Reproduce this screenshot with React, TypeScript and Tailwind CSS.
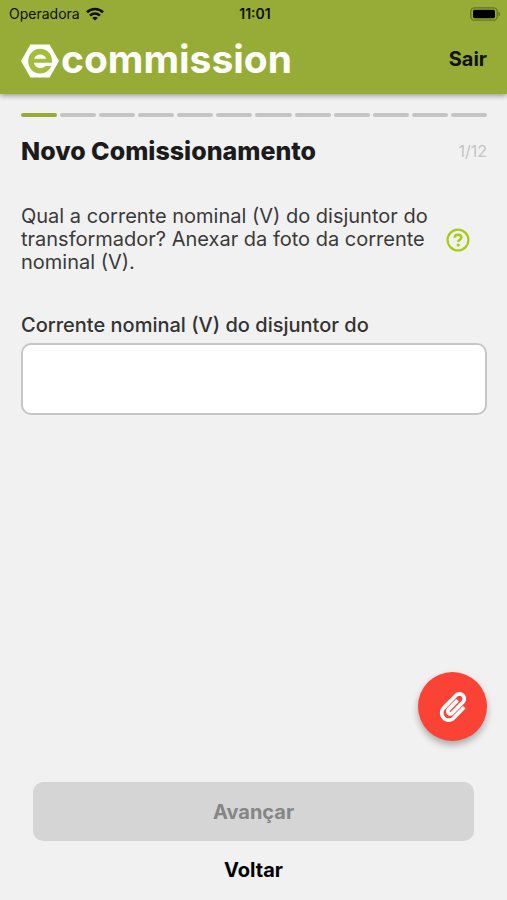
import { useState } from "react";
import { FaPaperclip } from "react-icons/fa";

const TOTAL_STEPS = 12;

function WifiIcon() {
  return (
    <svg viewBox="0 0 18 14" className="h-[14px] w-[18px]" fill="none" stroke="#0d0f03" strokeWidth="2.6" aria-hidden="true">
      <path d="M1 5.2C5.6 0.9 12.4 0.9 17 5.2" />
      <path d="M4 8.6C6.9 6 11.1 6 14 8.6" />
      <path d="M9 13.6 6.2 10.9C7.8 9.5 10.2 9.5 11.8 10.9Z" fill="#0d0f03" stroke="none" />
    </svg>
  );
}

function BatteryIcon() {
  return (
    <svg viewBox="0 0 31 14" className="h-[14px] w-[31px]" aria-hidden="true">
      <rect x="0.8" y="0.8" width="26.4" height="12.4" rx="3.6" fill="none" stroke="#66751f" strokeWidth="1.3" />
      <rect x="3" y="2.8" width="22" height="8.4" rx="1.6" fill="#000" />
      <path d="M28.4 4.6C30.6 5.4 30.6 8.6 28.4 9.4Z" fill="#66751f" />
    </svg>
  );
}

function HexMark() {
  return (
    <svg viewBox="0 0 38 34" className="h-[34px] w-[38px]" aria-hidden="true">
      <path d="M9.4 0.5H28.6L38 17 28.6 33.5H9.4L0 17Z" fill="#fff" />
      <path
        d="M31 18.8H12.8C13.6 22.2 16 24.2 19.2 24.2 21.4 24.2 23 23.4 24.4 22H30.2C28.4 26.6 24.4 29.4 19.2 29.4 12.3 29.4 7.2 24 7.2 17.2 7.2 10.4 12.3 4.8 19.2 4.8 26 4.8 31 10 31 16.8ZM13 14.8H25.3C24.4 12 22.2 10.4 19.2 10.4 16.1 10.4 13.9 12 13 14.8Z"
        fill="#a3bd3c"
        fillRule="evenodd"
      />
    </svg>
  );
}

function HelpIcon() {
  return (
    <svg viewBox="0 0 24 24" className="size-6" fill="none" stroke="#a9ca18" aria-hidden="true">
      <circle cx="12" cy="12" r="10.4" strokeWidth="2.2" />
      <path d="M8.7 9.7C8.7 7.8 10.1 6.7 12 6.7S15.3 7.9 15.3 9.5C15.3 11.7 12.2 11.9 12.2 14.1" strokeWidth="2.5" />
      <circle cx="12.2" cy="17" r="1.6" fill="#a9ca18" stroke="none" />
    </svg>
  );
}

export default function App() {
  const [value, setValue] = useState("");
  const step = 1;

  return (
    <div className="flex min-h-screen flex-col bg-[#f1f1f1] font-['Inter',sans-serif] text-[#1b1b1b]">
      <header className="bg-[#97ac36] shadow-[0_2px_5px_rgba(0,0,0,0.35)]">
        <div className="grid h-7 grid-cols-3 items-center pr-1.5 pl-[9px] text-sm text-[#0d0f03]">
          <div className="flex items-center gap-1.5">
            <span>Operadora</span>
            <WifiIcon />
          </div>
          <span className="text-center font-semibold">11:01</span>
          <div className="flex justify-end">
            <BatteryIcon />
          </div>
        </div>
        <div className="flex h-[66px] items-center justify-between pr-5 pl-[21px]">
          <h1 className="flex items-center gap-0.5 text-white">
            <HexMark />
            <span className="-mt-1 text-[39px] leading-10 font-bold">commission</span>
          </h1>
          <button type="button" className="pb-1 text-xl leading-6 font-bold text-[#10120a]">Sair</button>
        </div>
      </header>

      <main className="flex flex-1 flex-col pt-[19px] pr-5 pl-[21px]">
        <div className="flex gap-[3px]" role="progressbar" aria-label="Etapas" aria-valuemin={1} aria-valuemax={TOTAL_STEPS} aria-valuenow={step}>
          {Array.from({ length: TOTAL_STEPS }, (_, i) => (
            <span key={i} className={i < step ? "h-1 flex-1 rounded-full bg-[#97ac36]" : "h-1 flex-1 rounded-full bg-[#c4c4c4]"} />
          ))}
        </div>

        <div className="mt-[18px] flex items-center justify-between">
          <h2 className="text-[25px] leading-8 font-extrabold">Novo Comissionamento</h2>
          <span className="text-base text-[#c4c4c4]">1/12</span>
        </div>

        <div className="mt-[38px] flex items-center justify-between gap-3 pr-[17px]">
          <p className="max-w-[410px] text-xl leading-[23px] text-[#3a3a3a]">
            Qual a corrente nominal (V) do disjuntor do transformador? Anexar da foto da corrente nominal (V).
          </p>
          <button type="button" aria-label="Ajuda" className="shrink-0">
            <HelpIcon />
          </button>
        </div>

        <label htmlFor="corrente" className="mt-[39px] text-xl leading-6 font-medium text-[#333333]">
          Corrente nominal (V) do disjuntor do
        </label>
        <input
          id="corrente"
          type="text"
          value={value}
          onChange={(e) => setValue(e.target.value)}
          className="mt-1.5 h-[72px] w-full rounded-[10px] border-2 border-[#c6c6c6] bg-white px-4 text-xl outline-none"
        />

        <button
          type="button"
          aria-label="Anexar foto"
          className="mt-auto flex size-[69px] items-center justify-center self-end rounded-full bg-[#fa4235] text-white shadow-[0_4px_7px_rgba(0,0,0,0.3)]"
        >
          <FaPaperclip className="size-[30px]" aria-hidden="true" />
        </button>
      </main>

      <footer className="flex flex-col items-center px-[33px] pt-[41px] pb-[18px]">
        <button type="button" disabled className="h-[59px] w-full rounded-[10px] bg-[#d5d5d5] text-xl font-bold text-[#858585]">
          Avançar
        </button>
        <button type="button" className="mt-[17px] text-xl leading-6 font-bold text-black">Voltar</button>
      </footer>
    </div>
  );
}
